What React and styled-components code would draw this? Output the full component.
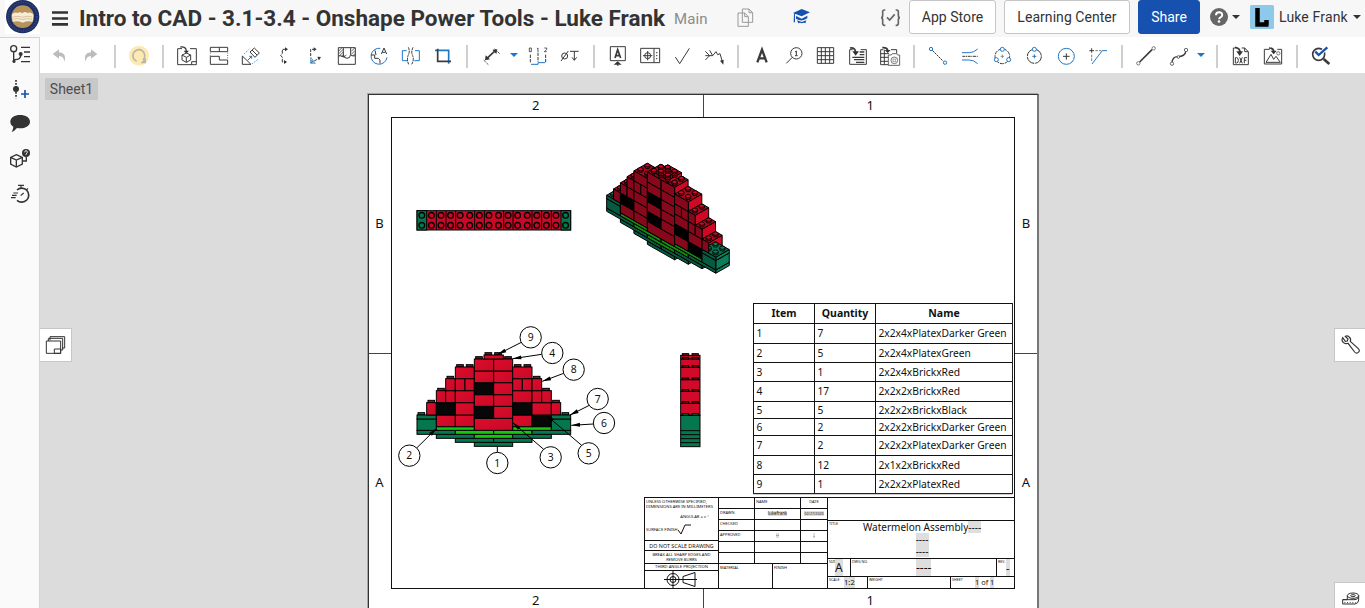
import React from "react";
import styled, { createGlobalStyle } from "styled-components";

const Global = createGlobalStyle`
  *{box-sizing:border-box}
  html,body{margin:0;padding:0;overflow:hidden}
  body{font-family:Roboto,"Liberation Sans",sans-serif;color:#333;background:#dcdcdc}
`;

const Page = styled.div`
  width: 1365px;
  height: 608px;
  display: flex;
  flex-direction: column;
  overflow: hidden;
`;
const Header = styled.header`
  height: 37px;
  flex: none;
  display: flex;
  align-items: center;
  background: #f7f7f7;
  padding: 0 3px 3px 5px;
`;
const LogoBox = styled.svg`
  width: 35px;
  height: 34px;
  flex: none;
  background: #fff;
`;
const MenuIcon = styled.svg`
  width: 16px;
  height: 16px;
  margin: 1px 11px 0 12px;
  flex: none;
`;
const Title = styled.h1`
  margin: 0;
  padding-top: 2px;
  width: 588px;
  flex: none;
  font-size: 22.5px;
  line-height: 34px;
  font-weight: 700;
  white-space: nowrap;
`;
const Branch = styled.span`
  margin: 4px 0 0 7px;
  width: 35px;
  flex: none;
  font-size: 15px;
  letter-spacing: 0.1px;
  color: #8b8b8b;
`;
const HeadIcon = styled.svg`
  flex: none;
  width: ${(p) => p.$w}px;
  height: ${(p) => p.$h}px;
  margin-left: ${(p) => p.$ml}px;
`;
const HeadButton = styled.button`
  height: 34px;
  width: ${(p) => p.$w}px;
  margin: 0 0 0 8px;
  padding: 0;
  flex: none;
  border: 1px solid ${(p) => (p.$primary ? "#1651b0" : "#c6c6c6")};
  border-radius: 3px;
  background: ${(p) => (p.$primary ? "#1651b0" : "#fff")};
  color: ${(p) => (p.$primary ? "#fff" : "#333")};
  font: 14px Roboto, sans-serif;
  letter-spacing: ${(p) => p.$ls || 0}px;
`;
const Caret = styled.span`
  width: 0;
  height: 0;
  flex: none;
  margin-left: ${(p) => p.$ml || 0}px;
  border: 4px solid transparent;
  border-top-color: ${(p) => p.$color || "#333"};
  border-bottom: 0;
`;
const UserName = styled.span`
  width: 69px;
  flex: none;
  margin-left: 5px;
  font-size: 14px;
  letter-spacing: 0.15px;
  white-space: nowrap;
`;
const Body = styled.div`
  flex: 1;
  display: flex;
  min-height: 0;
`;
const Sidebar = styled.nav`
  width: 40px;
  flex: none;
  background: #fafafa;
  border-right: 1px solid #d4d4d4;
  border-top: 1px solid #d4d4d4;
  display: flex;
  flex-direction: column;
`;
const SideIcon = styled.svg`
  width: 39px;
  height: 35px;
  flex: none;
  fill: none;
  stroke: #333;
  stroke-width: 4;
`;
const Main = styled.main`
  flex: 1;
  display: flex;
  flex-direction: column;
  min-width: 0;
`;
const Toolbar = styled.div`
  height: 36px;
  flex: none;
  display: flex;
  align-items: center;
  padding-left: 3px;
  background: #fff;
`;
const ToolSvg = styled.svg`
  width: 32px;
  height: 36px;
  flex: none;
  fill: none;
  stroke: #3a3a3a;
  stroke-width: 3;
`;
const Separator = styled.i`
  width: 2px;
  height: 23px;
  margin: 3px 7px 0;
  flex: none;
  background: #cfcfcf;
`;
const CaretSlot = styled.span`
  width: ${(p) => p.$w}px;
  padding-right: 2px;
  display: flex;
  justify-content: center;
  flex: none;
`;
const Canvas = styled.section`
  flex: 1;
  position: relative;
  min-height: 0;
  overflow: hidden;
  background: #dcdcdc;
  padding: 21px 0 0 328px;
`;
const SheetTab = styled.div`
  position: absolute;
  left: 5px;
  top: 5px;
  width: 53px;
  height: 22px;
  background: #c8c8c8;
  color: #4d4d4d;
  font-size: 14px;
  line-height: 23px;
  text-align: center;
`;
const FloatTab = styled.div`
  position: absolute;
  ${(p) => (p.$left ? "left:0;border-left:0 !important;" : "right:0;border-right:0 !important;")}
  top: ${(p) => p.$top}px;
  width: ${(p) => (p.$left ? 32 : 31)}px;
  height: 34px;
  border: 1px solid #c6c6c6;
  background: #fff;
  svg { display: block; width: 100%; height: 100%; fill: none; stroke: #333; }
`;
const Sheet = styled.div`
  width: 671px;
  height: 518px;
  display: grid;
  grid-template-columns: 22px 624px 22px;
  grid-template-rows: 22px 472px 22px;
  background: #fff;
  border: 1px solid #333;
  border-right: 2px solid #777;
  box-shadow: -1px -1px 0 #a5a5a5;
  font-family: "Noto Sans", sans-serif;
  color: #111;
`;
const Zone = styled.div`
  grid-area: ${(p) => p.$area};
  display: flex;
  flex-direction: ${(p) => (p.$side ? "column" : "row")};
  span {
    flex: 1;
    display: flex;
    align-items: center;
    justify-content: center;
    padding: ${(p) => p.$nudge || 0};
    font-size: 13px;
    line-height: 16px;
  }
  span + span { border: 0 solid #444; border-${(p) => (p.$side ? "top" : "left")}-width: 1px; }
`;
const Frame = styled.div`
  grid-area: 2 / 2;
  position: relative;
  border: 1px solid #111;
  display: flex;
  flex-direction: column;
  justify-content: flex-end;
  align-items: flex-end;
`;
const ViewSvg = styled.svg`
  position: absolute;
  left: ${(p) => p.$x - 392}px;
  top: ${(p) => p.$y - 118}px;
  width: ${(p) => p.$w}px;
  height: ${(p) => p.$h}px;
  overflow: visible;
  stroke: #000;
  stroke-width: 3;
`;
const Bom = styled.div`
  width: 260px;
  margin: 0 1px 3px 0;
  border: 0 solid #222;
  border-width: 0 1px 1px 0;
  box-shadow: 0 1px 0 -0.5px #999;
`;
const BomRow = styled.div`
  height: ${(p) => p.$h}px;
  display: grid;
  grid-template-columns: 61px 61px 137px;
  font-size: ${(p) => (p.$head ? 10.5 : 10.25)}px;
  font-weight: ${(p) => (p.$head ? 700 : 400)};
  text-align: ${(p) => (p.$head ? "center" : "left")};
  span {
    border: 0 solid #111;
    border-width: 1px 0 0 1px;
    padding-left: ${(p) => (p.$head ? 0 : 2.4)}px;
    line-height: ${(p) => p.$h - 1}px;
    white-space: nowrap;
  }
`;
const TitleBlock = styled.div`
  width: 370px;
  height: 91px;
  display: grid;
  grid-template-columns: 74px 109px 187px;
`;
const Tracks = styled.div`
  display: grid;
  grid-template-rows: ${(p) => p.$rows || "none"};
  grid-template-columns: ${(p) => p.$cols || "none"};
`;
const Cell = styled.div`
  border: 0 solid #111;
  border-width: 1px 0 0 1px;
  min-width: 0;
  min-height: 0;
  overflow: hidden;
  font-size: ${(p) => p.$fs || 4}px;
  line-height: ${(p) => p.$lh || 5}px;
  text-align: ${(p) => (p.$center ? "center" : "left")};
  padding: ${(p) => p.$pad || "1px"};
  white-space: nowrap;
`;
const Field = styled.span`
  background: #dedede;
  display: inline-block;
  font-size: ${(p) => p.$fs}px;
  line-height: ${(p) => p.$lh}px;
`;
const TitleLine = styled.div`
  font-size: 10px;
  line-height: 12px;
`;
const SheetOf = styled.span`
  font-size: 7.4px;
`;
const Stack = styled.div`
  display: flex;
  flex-direction: column;
  align-items: center;
`;
const LabelRow = styled.div`
  display: flex;
  align-items: flex-start;
  gap: ${(p) => p.$gap}px;
`;
const Tag = styled.span`
  width: ${(p) => p.$w}px;
  flex: none;
  font-size: 3.6px;
`;
const Block = styled.div`
  text-align: ${(p) => p.$align || "left"};
  padding: ${(p) => p.$pad || 0};
`;

const Tool = ({ at, children }) => <ToolSvg viewBox={`${at} 111 96 108`}>{children}</ToolSvg>;
const BLUE = "#1d78c8";

const View = ({ x, y, w, h, children }) => (
  <ViewSvg $x={x} $y={y} $w={w} $h={h} viewBox={`0 0 ${w * 3} ${h * 3}`}>{children}</ViewSvg>
);

/* bricks: [left, right, top, bottom, colour, has studs] */
const PLATES = [
  [223, 338, 367, 379, "d"], [166, 281, 355, 367, "d"], [281, 396, 355, 367, "d"],
  [109, 223, 343, 355, "d"], [223, 338, 343, 355, "g"], [338, 454, 343, 355, "d"],
  [51, 166, 331, 343, "d"], [166, 281, 331, 343, "g"], [281, 396, 331, 343, "g"], [396, 512, 331, 343, "d"],
  [109, 223, 320, 331, "g"], [338, 454, 320, 331, "g"],
];
const BRICKS = [
  [51, 109, 297, 331, "d"], [51, 109, 285, 297, "d", 1],
  [80, 109, 248, 285, "r", 1],
  [109, 166, 285, 320, "r"], [109, 166, 248, 285, "k"], [109, 137, 212, 248, "r", 1],
  [137, 166, 212, 248, "r"], [137, 166, 176, 212, "r", 1],
  [166, 223, 285, 320, "r"], [166, 223, 248, 285, "r"], [166, 223, 212, 248, "r"],
  [166, 195, 176, 212, "r"], [195, 223, 176, 212, "r"], [166, 223, 141, 176, "r", 1],
  [223, 338, 295, 331, "r"],
  [223, 281, 259, 295, "k"], [223, 281, 224, 259, "r"], [223, 281, 188, 224, "k"], [223, 281, 153, 188, "r"], [223, 281, 117, 153, "r", 1],
  [281, 338, 259, 295, "r"], [281, 338, 224, 259, "r"], [281, 338, 188, 224, "r"], [281, 338, 153, 188, "r"], [281, 338, 117, 153, "r", 1],
  [252, 310, 105, 117, "r", 1],
  [338, 396, 285, 320, "r"], [338, 396, 248, 285, "k"], [338, 396, 212, 248, "r"],
  [338, 367, 176, 212, "r"], [367, 396, 176, 212, "r"], [338, 396, 141, 176, "r", 1],
  [396, 454, 285, 320, "k"], [396, 454, 248, 285, "r"], [396, 425, 212, 248, "r"], [396, 425, 176, 212, "r", 1],
  [425, 454, 212, 248, "r", 1],
  [454, 482, 248, 285, "r", 1],
  [454, 512, 297, 331, "d"], [454, 512, 285, 297, "d", 1],
];
const STUDS = [
  [255, 105], [284, 105], [227, 117], [314, 117], [170, 141], [199, 141], [343, 141], [372, 141],
  [141, 176], [400, 176], [113, 212], [428, 212], [84, 248], [458, 248], [54, 285], [486, 285],
];
const FRONT = { r: "url(#redShade)", k: "#070707", g: "#12c80a", d: "#04774f" };
const BALLOONS = [
  [9, 392, 52, 364, 67, 293, 103], [4, 457, 99, 425, 103, 338, 116], [8, 521, 149, 491, 160, 427, 184],
  [7, 593, 237, 568, 256, 510, 285], [6, 612, 309, 580, 312, 514, 316], [5, 566, 400, 545, 376, 438, 285],
  [3, 452, 412, 431, 388, 338, 308], [1, 292, 429, 292, 397, 292, 380], [2, 28, 407, 50, 384, 110, 325],
];

function Arrow({ x1, y1, x2, y2 }) {
  const l = Math.hypot(x2 - x1, y2 - y1);
  const ux = (x2 - x1) / l;
  const uy = (y2 - y1) / l;
  const bx = x2 - ux * 26;
  const by = y2 - uy * 26;
  return (
    <g>
      <line x1={x1} y1={y1} x2={x2} y2={y2} />
      {l > 30 && <polygon stroke="none" fill="#000" points={`${x2},${y2} ${bx - uy * 6},${by + ux * 6} ${bx + uy * 6},${by - ux * 6}`} />}
    </g>
  );
}

const FrontView = () => (
  <View x={400} y={320} w={230} h={160}>
    <defs>
      <linearGradient id="redShade" x1="0" y1="0" x2="1" y2="1">
        <stop offset="0" stopColor="#de0c2c" />
        <stop offset="1" stopColor="#c60a26" />
      </linearGradient>
    </defs>
    {STUDS.map(([x, y]) => <rect key={x} x={x} y={y - 7} width="20" height="7" fill={y === 285 ? "#04774f" : "#a00a20"} />)}
    {[...PLATES, ...BRICKS].map((b, i) => (
      <rect key={i} x={b[0]} y={b[2]} width={b[1] - b[0]} height={b[3] - b[2]} fill={FRONT[b[4]]} />
    ))}
    {BALLOONS.map(([n, cx, cy, x1, y1, x2, y2]) => (
      <g key={n}>
        <Arrow x1={x1} y1={y1} x2={x2} y2={y2} />
        <circle cx={cx} cy={cy} r="32" fill="#fff" />
        <text x={cx} y={cy + 11} fontSize="31" textAnchor="middle" stroke="none" fill="#111">{n}</text>
      </g>
    ))}
  </View>
);

const ISO = {
  front: { r: "#86081a", k: "#000", g: "#148a0c", d: "#075a40" },
  right: { r: "#cf0824", k: "#050505", g: "#19a510", d: "#0b7d59" },
  top: { r: "#a30a20", k: "#111", g: "#16950e", d: "#0b6e4e" },
};
const iso = (u, v, d) => [0.71 * u + 13.8 + 0.71 * d, 0.403 * u + 0.83 * v - 121.3 - 0.403 * d];
const face = (...pts) => pts.map((p) => iso(...p).map((n) => n.toFixed(1)).join(",")).join(" ");

function IsoStuds({ b }) {
  const out = [];
  for (let d = 43; d > 0; d -= 29) {
    for (let u = b[0] + 14; u < b[1]; u += 29) {
      const [x, y] = iso(u, b[2], d);
      out.push(
        <g key={`${u}-${d}`} fill={ISO.right[b[4]]} strokeWidth="2.6">
          <path d={`M${x - 8} ${y - 5}v5a8 5 0 0 0 16 0v-5`} fill={ISO.front[b[4]]} />
          <ellipse cx={x} cy={y - 5} rx="8" ry="5" />
        </g>
      );
    }
  }
  return out;
}

const IsoView = () => (
  <View x={590} y={150} w={150} h={130}>
    {[...PLATES, ...BRICKS].map((b, i) => (
      <g key={i}>
        <polygon fill={ISO.right[b[4]]} points={face([b[1], b[2], 0], [b[1], b[2], 57], [b[1], b[3], 57], [b[1], b[3], 0])} />
        <polygon fill={ISO.top[b[4]]} points={face([b[0], b[2], 0], [b[1], b[2], 0], [b[1], b[2], 57], [b[0], b[2], 57])} />
        {b[5] && <IsoStuds b={b} />}
      </g>
    ))}
    {[...PLATES, ...BRICKS].map((b, i) => (
      <polygon key={i} fill={ISO.front[b[4]]} points={face([b[0], b[2], 0], [b[1], b[2], 0], [b[1], b[3], 0], [b[0], b[3], 0])} />
    ))}
    {BRICKS.filter((b) => b[5] && b[2] < 120).map((b, i) => <IsoStuds key={i} b={b} />)}
  </View>
);

const TopView = () => (
  <View x={405} y={200} w={180} h={40}>
    <rect x="36" y="32" width="461" height="58" fill="#cb0926" />
    <rect x="36" y="32" width="29" height="58" fill="#04774f" />
    <rect x="468" y="32" width="29" height="58" fill="#04774f" />
    {[94, 123, 152, 209, 238, 296, 324, 381, 410, 439].map((x) => <line key={x} x1={x} x2={x} y1="32" y2="90" />)}
    {Array.from({ length: 32 }, (_, i) => (
      <circle key={i} cx={50.5 + 28.75 * (i >> 1)} cy={i % 2 ? 76 : 46} r="8.5" fill="none" strokeWidth="4" />
    ))}
  </View>
);

const SideView = () => (
  <View x={660} y={340} w={60} h={115}>
    <rect x="62" y="46" width="58" height="180" fill="#d00a28" />
    <rect x="62" y="226" width="58" height="94" fill="#04774f" />
    {[57, 82, 119, 154, 190, 226, 272, 284, 296, 308].map((y) => <line key={y} x1="62" x2="120" y1={y} y2={y} />)}
    {[46, 57, 82, 119, 154, 190, 226].map((y) => (
      <g key={y} fill={y === 226 ? "#04774f" : "#8f0a1e"}>
        <rect x="67" y={y - 5} width="19" height="5" />
        <rect x="96" y={y - 5} width="19" height="5" />
      </g>
    ))}
  </View>
);

const PARTS = [
  [1, 7, "2x2x4xPlatexDarker Green", 20], [2, 5, "2x2x4xPlatexGreen", 19], [3, 1, "2x2x4xBrickxRed", 19],
  [4, 17, "2x2x2xBrickxRed", 20], [5, 5, "2x2x2xBrickxBlack", 17], [6, 2, "2x2x2xBrickxDarker Green", 17],
  [7, 2, "2x2x2xPlatexDarker Green", 20], [8, 12, "2x1x2xBrickxRed", 19], [9, 1, "2x2x2xPlatexRed", 19],
];

const PartsTable = () => (
  <Bom>
    <BomRow $h={20} $head><span>Item</span><span>Quantity</span><span>Name</span></BomRow>
    {PARTS.map(([n, q, name, h]) => (
      <BomRow key={n} $h={h}><span>{n}</span><span>{q}</span><span>{name}</span></BomRow>
    ))}
  </Bom>
);

const SIGN_ROWS = [["", "NAME", "DATE"], ["DRAWN", "lukefrank", "02/27/2023"], ["CHECKED", "", ""], ["APPROVED", "--", "--"], ["", "", ""], ["", "", ""]];

const DrawingTitle = () => (
  <TitleBlock>
    <Tracks $rows="43px 10px 13px 7px 18px">
      <Cell $fs={4.1}>
        UNLESS OTHERWISE SPECIFIED,<br />DIMENSIONS ARE IN MILLIMETERS
        <Block $align="right" $pad="5px 8px 0 0">ANGULAR = ± °</Block>
        <LabelRow $gap={0}>
          <Block $pad="8px 0 0 0">SURFACE FINISH</Block>
          <svg width="14" height="16" viewBox="0 -3 14 16" fill="none" stroke="#111" strokeWidth="1"><path d="M0 8l3 4 4-9h6" /></svg>
        </LabelRow>
      </Cell>
      <Cell $center $fs={5.4} $lh={8}>DO NOT SCALE DRAWING</Cell>
      <Cell $center $fs={4.1} $lh={5}>BREAK ALL SHARP EDGES AND<br />REMOVE BURRS</Cell>
      <Cell $center $fs={4.2} $lh={5} $pad="0">THIRD ANGLE PROJECTION</Cell>
      <Cell $center $pad="0">
        <svg width="50" height="17" viewBox="0 0 50 17" fill="none" stroke="#111">
          <circle cx="16" cy="8.5" r="6" /><circle cx="16" cy="8.5" r="3" />
          <path d="M7 8.5h18M16 0v17M26 5.500l12-4v14l-12-4zM24 8.500h16" />
        </svg>
      </Cell>
    </Tracks>
    <Tracks $rows="66px 25px">
      <Tracks $rows="repeat(6, 11px)">
        {SIGN_ROWS.map((r, i) => (
          <Tracks key={i} $cols="36px 46px 27px">
            <Cell>{r[0]}</Cell>
            <Cell $center={i > 0} $pad={i ? "2px 0 0" : "1px"}>{i && r[1] ? <Field $fs={4.4} $lh={5}>{r[1]}</Field> : r[1]}</Cell>
            <Cell $center $pad={i ? "2px 0 0" : "1px"}>{i && r[2] ? <Field $fs={3.6} $lh={5}>{r[2]}</Field> : r[2]}</Cell>
          </Tracks>
        ))}
      </Tracks>
      <Tracks $cols="54px 55px"><Cell>MATERIAL</Cell><Cell>FINISH</Cell></Tracks>
    </Tracks>
    <Tracks $rows="23px 38px 18px 12px">
      <Cell />
      <Cell $pad="0 1px">
        <LabelRow $gap={0}>
          <Tag $w={34}>TITLE</Tag>
          <Stack>
            <TitleLine>Watermelon Assembly<Field $fs={10} $lh={12}>----</Field></TitleLine>
            <Field $fs={10} $lh={12}>----</Field>
            <Field $fs={10} $lh={12}>----</Field>
          </Stack>
        </LabelRow>
      </Cell>
      <Tracks $cols="23px 146px 18px">
        <Cell $pad="0 1px"><LabelRow $gap={0}><Tag $w={6}>SIZE</Tag><Field $fs={12} $lh={17}>A</Field></LabelRow></Cell>
        <Cell $pad="0 1px"><LabelRow $gap={0}><Tag $w={64}>DWG NO.</Tag><Field $fs={12} $lh={17}>----</Field></LabelRow></Cell>
        <Cell $pad="0 1px"><LabelRow $gap={0}><Tag $w={8}>REV.</Tag><Field $fs={11} $lh={17}>-</Field></LabelRow></Cell>
      </Tracks>
      <Tracks $cols="40px 83px 64px">
        <Cell $pad="0 1px"><LabelRow $gap={0}><Tag $w={15}>SCALE</Tag><Field $fs={7.6} $lh={11}>1:2</Field></LabelRow></Cell>
        <Cell $pad="0 1px"><Tag>WEIGHT</Tag></Cell>
        <Cell $pad="0 1px"><LabelRow $gap={0}><Tag $w={23}>SHEET</Tag><Block><Field $fs={7.4} $lh={11}>1</Field><SheetOf> of </SheetOf><Field $fs={7.4} $lh={11}>1</Field></Block></LabelRow></Cell>
      </Tracks>
    </Tracks>
  </TitleBlock>
);

const Logo = () => (
  <LogoBox viewBox="0 0 105 102">
    <circle cx="53" cy="50" r="50" fill="#1d2f66" />
    <circle cx="53" cy="50" r="43" fill="none" stroke="#3c4c73" strokeWidth="5" strokeDasharray="3 4" />
    <circle cx="53" cy="50" r="34" fill="#b6935a" />
    <path d="M21 43q8-8 17-4 7-5 14 1 8-7 15-1 10-4 18 4l-2 22q-15-4-30 3-15-7-30-3z" fill="#f6ecd9" />
    <path d="M25 51q14-5 28 1 14-6 28-1M25 58q14-5 28 1 14-6 28-1" fill="none" stroke="#c9ac78" strokeWidth="2" />
  </LogoBox>
);

const ViewTools = () => (
  <>
    <Tool at={129}><path stroke="none" fill="#bcbcbc" d="M177 148l-19 14 19 14v-8q15 0 16 18 9-27-16-29z" /></Tool>
    <Tool at={225}><path stroke="none" fill="#bcbcbc" d="M273 148l19 14-19 14v-8q-15 0-16 18-9-27 16-29z" /></Tool>
    <Separator />
    <Tool at={369}>
      <circle cx="417" cy="167" r="30" fill="#fdeab3" stroke="none" />
      <path stroke="#b9b5a8" strokeWidth="5" d="M410 184A18 18 0 1 1 429 180" /><path fill="#b9b5a8" stroke="none" d="M421 190h17v-17z" />
    </Tool>
    <Separator />
    <Tool at={513}>
      <path d="M546 146h-13v48h56v-48h-19M575 194v-9h14" />
      <path d="M541 141q17-2 18 12" strokeWidth="4" /><path d="M551 152h16l-8 9z" fill="#333" stroke="none" />
      <path d="M559 159l13 6v15l-13 7-13-7v-15zM546 165l13 7 13-7M559 172v15" />
    </Tool>
    <Tool at={609}>
      <path d="M631 142h52v13h-52zM658 142v13M631 193v-24h27v11h25v13z" /><path stroke={BLUE} strokeDasharray="3 4" d="M631 158v9M683 158v20" />
    </Tool>
    <Tool at={705}>
      <path d="M727 168l26 25h-26zM750 156l13-12 15 15-13 13zM756 150l15 15" /><path stroke={BLUE} strokeDasharray="3 4" d="M733 161l16-15M756 192l18-14" /><path stroke={BLUE} d="M743 181l12-12M748 169h7v7" />
    </Tool>
    <Tool at={801}><path d="M860 148h-13v12l-5 6 5 6v14h11" strokeDasharray="12 3" /><path fill="#333" stroke="none" d="M855 142l9 6-9 6zM852 180l9 6-9 6z" /></Tool>
    <Tool at={897}>
      <path d="M932 168v-20h13M932 188l26-13" strokeDasharray="9 3" /><path fill="#333" stroke="none" d="M941 142l9 6-9 6zM952 170l11 1-6 10z" /><path stroke={BLUE} strokeWidth="2" d="M932 172v18h14zM936 178v9M932 180l9 9" />
    </Tool>
    <Tool at={993}>
      <path d="M1015 143h51v50h-51zM1015 168q8-3 15 3v-28M1030 163q1 12 11 12t11-12v-20M1052 165q8 5 14 2" /><path strokeWidth="2.4" d="M1016 153l9-9M1017 161l12-13M1018 168l12-12M1024 171l6-6M1031 172l8-7M1054 154l10-10M1054 163l11-11M1058 168l8-8" />
    </Tool>
    <Tool at={1089}>
      <path stroke={BLUE} d="M1141 145a24 24 0 1 0 20 27" /><path d="M1113 165h11v10h11l5 5v10" /><path d="M1125 151l3 14M1144 162l8-18 8 18M1147 157h9" />
    </Tool>
    <Tool at={1185}>
      <path stroke={BLUE} d="M1220 152h-13v30h15M1245 152h13v30h-15" /><path strokeDasharray="9 2" d="M1225 142q6 13-1 25-4 13 2 26M1239 142q-7 14-1 25 5 13-3 26" />
    </Tool>
    <Tool at={1281}><path stroke={BLUE} strokeWidth="5" d="M1305 151h41v40" /><path strokeWidth="5" d="M1313 146v38h40" /></Tool>
    <Separator />
  </>
);

const NoteTools = () => (
  <>
    <Tool at={75}>
      <path strokeWidth="5" d="M110 176l26-24" /><path fill="#333" stroke="none" d="M105 181l2-15 13 12zM142 148l-15 1 12 13z" /><path strokeWidth="2.5" d="M134 146l15 15M101 180l14 14" strokeDasharray="9 3" />
    </Tool>
    <CaretSlot $w={15}><Caret $color={BLUE} /></CaretSlot>
    <Tool at={216}>
      <path d="M241 164v23M264 158v28M287 164v23" strokeDasharray="10 3" /><path stroke={BLUE} d="M243 193h21v-5h21" />
      <path strokeWidth="2.5" d="M238 144h6v11h-6zM261 146l3-2v12M283 144h7v5l-7 6h7" />
    </Tool>
    <Tool at={312}><circle cx="344" cy="168" r="9" /><path d="M333 183l22-30M360 154h26M373 154v26M366 172l7 9 7-9" /></Tool>
    <Separator />
    <Tool at={456}>
      <path d="M481 140h45v42h-45z" /><path strokeWidth="5" d="M495 174l8-25 9 25M498 167h12" /><path fill="#333" stroke="none" d="M491 194l12-10 12 10zM502 194h3v4h-3z" />
    </Tool>
    <Tool at={552}>
      <path d="M572 145h57v43h-57zM612 145v43" /><circle cx="593" cy="167" r="9" /><path d="M579 167h28M593 153v28" /><path strokeDasharray="4 4" d="M618 158h6M618 167h6M618 176h6" />
    </Tool>
    <Tool at={648}><path d="M676 171l13 20 29-46" /></Tool>
    <Tool at={744}><path d="M766 154l13 13-13 13M766 167h22l10-12 5 9 7-3 7 24M779 151l9 16" /><path fill="#333" stroke="none" d="M810 182l11-3-1 15z" /></Tool>
    <Separator />
    <Tool at={888}><path strokeWidth="7" d="M922 187l14-38 14 38M927 175h18" /></Tool>
    <Tool at={984}><circle cx="1039" cy="160" r="17" /><path d="M1027 172l-18 18M1035 156l4-3v14M1035 167h8" /></Tool>
    <Tool at={1080}><path d="M1102 143h49v47h-49zM1114 143v47M1126 143v47M1139 143v47M1102 155h49M1102 167h49M1102 179h49" /></Tool>
    <Tool at={1176}>
      <path d="M1208 149h-9v44h50v-44h-17" /><path strokeWidth="5" d="M1200 144q15-2 17 12" /><path fill="#333" stroke="none" d="M1207 154h20l-10 13z" /><path strokeWidth="4" d="M1229 156h14M1229 164h14M1207 172h36M1212 179h31M1218 187h25" />
    </Tool>
    <Tool at={1272}>
      <path d="M1300 149h-8v45h26M1323 149h17v12M1303 149v45M1292 161h25M1292 172h24M1292 184h24" /><path strokeWidth="5" d="M1297 143q14-1 16 7" /><path fill="#333" stroke="none" d="M1304 150h18l-9 9z" />
      <path fill="#fff" d="M1315 165h9l3-4h13l3 4h6v31h-34z" stroke="#666" /><circle cx="1333" cy="181" r="10" stroke="#777" /><path strokeWidth="2" stroke="#777" d="M1329 177h8v8h-8z" />
    </Tool>
    <Separator />
  </>
);

const SketchTools = () => (
  <>
    <Tool at={51}><path strokeDasharray="7 2" d="M82 151l33 33" /><g stroke={BLUE}><circle cx="78" cy="147" r="5" /><circle cx="120" cy="188" r="5" /></g></Tool>
    <Tool at={147}><path d="M172 169h47" strokeDasharray="9 2 3 2" /><path stroke={BLUE} d="M171 158h22q13 0 25-11M171 180h22q13 0 25 11" /></Tool>
    <Tool at={243}>
      <circle cx="292" cy="169" r="22" strokeDasharray="12 3" /><path strokeWidth="2.5" stroke="#777" d="M292 164v10M287 169h10" /><g stroke={BLUE} fill="#fff"><circle cx="292" cy="148" r="6" /><circle cx="274" cy="179" r="6" /><circle cx="311" cy="179" r="6" /></g>
    </Tool>
    <Tool at={339}><circle cx="388" cy="169" r="21" strokeDasharray="30 3" /><circle cx="388" cy="148" r="6" fill="#fff" stroke={BLUE} /><path stroke={BLUE} d="M388 163v12M382 169h12" /></Tool>
    <Tool at={435}><circle cx="484" cy="169" r="24" stroke={BLUE} /><path d="M484 160v19M474 169h20" /></Tool>
    <Tool at={531}><path d="M560 145v13M553 152h14" /><path strokeDasharray="8 3" d="M571 152h18M560 164v22" strokeWidth="2" /><path stroke={BLUE} d="M606 152h-14l-31 40" /></Tool>
    <Separator />
    <Tool at={675}><path strokeWidth="5" d="M704 186l37-37" /><g fill="#fff" stroke="#777"><circle cx="700" cy="190" r="5" /><circle cx="746" cy="145" r="5" /></g></Tool>
    <Tool at={771}><path strokeWidth="4" d="M801 189q1-19 17-19 23 0 25-18" /><g fill="#fff" stroke="#666"><circle cx="801" cy="191" r="5" /><circle cx="820" cy="171" r="4" /><circle cx="843" cy="150" r="5" /></g></Tool>
    <CaretSlot $w={15}><Caret $color={BLUE} /></CaretSlot>
    <Separator />
    <Tool at={960}>
      <path d="M991 144h-6v50h45v-39l-11-11h-9M1019 144v11h11" /><path strokeWidth="5" d="M990 142q15 2 15 14" /><path fill="#333" stroke="none" d="M994 154h20l-10 14z" />
      <path strokeWidth="3" d="M991 173v16h4q5 0 5-8t-5-8zM1004 172l8 18M1012 172l-8 18M1018 190v-17h8M1018 181h6" />
    </Tool>
    <Tool at={1056}>
      <path d="M1094 148h-16v44h52v-44h-13M1083 187l15-24 8 15 7-9 13 18z" /><path strokeWidth="5" d="M1092 144q13 0 14 9" /><path fill="#333" stroke="none" d="M1097 152h18l-9 11z" /><circle cx="1120" cy="160" r="5" stroke="#777" />
    </Tool>
    <Separator />
    <Tool at={1200}>
      <circle cx="1241" cy="163" r="18" strokeWidth="5" /><path strokeWidth="8" d="M1256 177l17 15" /><path stroke="#fff" strokeWidth="12" d="M1231 156l10 10 24-23" /><path stroke="#1651b0" strokeWidth="7" d="M1231 155l10 10 26-23" />
    </Tool>
  </>
);

export default function App() {
  return (
    <Page>
      <Global />
      <Header>
        <Logo />
        <MenuIcon viewBox="0 0 16 16" stroke="#333" strokeWidth="2.6"><path d="M0 2.5h16M0 8.5h16M0 14.4h16" /></MenuIcon>
        <Title>Intro to CAD - 3.1-3.4 - Onshape Power Tools - Luke Frank</Title>
        <Branch>Main</Branch>
        <HeadIcon $w={17} $h={20} $ml={28} viewBox="860 22 51 60" fill="#f7f7f7" stroke="#999" strokeWidth="3">
          <path d="M876 28h20l11 11v29h-31zM896 28v11h11M863 40h20l11 11v29h-31zM883 40v11h11" />
        </HeadIcon>
        <HeadIcon $w={17} $h={18} $ml={39} viewBox="1028 25 51 54" fill="#1651b0">
          <path d="M1028 40l26-12 25 10-25 12zM1037 49l17 8 17-9v8q-17 12-34 1zM1031 42h3v26h-4zM1040 62l14 5 14-5-3 9q-5-4-11 0-5-4-10 0z" />
        </HeadIcon>
        <HeadIcon $w={21} $h={20} $ml={70} viewBox="1285 22 63 60" fill="none" stroke="#666" strokeWidth="5">
          <path d="M1301 31h-3q-5 0-5 6v10q0 7-5 7 5 0 5 7v10q0 6 5 6h3M1332 31h3q5 0 5 6v10q0 7 5 7-5 0-5 7v10q0 6-5 6h-3M1306 53l8 8 15-17" />
        </HeadIcon>
        <HeadButton $w={87} $ls={0.05}>App Store</HeadButton>
        <HeadButton $w={126} $ls={0.05}>Learning Center</HeadButton>
        <HeadButton $w={62} $primary>Share</HeadButton>
        <HeadIcon $w={18} $h={18} $ml={10} viewBox="0 0 18 18">
          <circle cx="9" cy="9" r="9" fill="#666" /><path d="M6 7.2q0-3 3.1-3T12.200 7q0 1.500-1.700 2.400-1.400.7-1.400 1.800" fill="none" stroke="#fff" strokeWidth="2" /><circle cx="9" cy="13.500" r="1.300" fill="#fff" />
        </HeadIcon>
        <Caret $ml={4} />
        <HeadIcon $w={24} $h={24} $ml={10} viewBox="0 0 24 24">
          <rect width="24" height="24" rx="1.500" fill="#8ec9ea" /><path d="M7.500 3v16.500h11M16.500 15v5" fill="none" stroke="#000" strokeWidth="4.500" />
        </HeadIcon>
        <UserName>Luke Frank</UserName>
        <Caret $ml={5} />
      </Header>
      <Body>
        <Sidebar>
          <SideIcon viewBox="0 114 117 105">
            <circle cx="41" cy="146" r="9" /><path d="M41 156v31M43 179q20 1 20-17M63 142h27M72 156h18M72 170h18M63 185h27" /><circle cx="42" cy="184" r="3" fill="#333" /><circle cx="62" cy="162" r="4" fill="#333" />
          </SideIcon>
          <SideIcon viewBox="0 219 117 105">
            <path strokeWidth="5" strokeDasharray="5 4" d="M48 240v55" /><circle cx="48" cy="267" r="7" fill="#333" /><path stroke="#1651b0" strokeWidth="5" d="M75 270v24M63 282h24" />
          </SideIcon>
          <SideIcon viewBox="0 114 117 105"><path stroke="none" fill="#333" d="M60 136c17 0 30 8 30 20s-13 20-30 20q-5 0-9-1-7 9-16 12 4-7 5-16-9-5-9-15c0-12 13-20 29-20z" transform="translate(0 -1)" /></SideIcon>
          <SideIcon viewBox="0 219 117 105">
            <path d="M49 254l18 8v20l-18 9-17-9v-20zM32 262l17 8 18-8M49 270v21M68 273h11v-12" /><circle cx="78" cy="249" r="12" fill="#333" stroke="none" /><path stroke="#fff" strokeWidth="2.5" d="M74 247q0-5 4-5t4 4-4 6v3" />
          </SideIcon>
          <SideIcon viewBox="0 324 117 105">
            <path d="M51 360A21 21 0 1 1 51 391" strokeWidth="5" /><path d="M54 346h18M63 347v8M79 360l5-5M62 377l9-8M40 369h14M36 376h14M33 383h14" strokeWidth="3.5" />
          </SideIcon>
        </Sidebar>
        <Main>
          <Toolbar><ViewTools /><NoteTools /><SketchTools /></Toolbar>
          <Canvas>
            <Sheet>
              <Zone $area="1 / 1 / 2 / 4" $nudge="0 0 2px"><span>2</span><span>1</span></Zone>
              <Zone $area="3 / 1 / 4 / 4"><span>2</span><span>1</span></Zone>
              <Zone $area="1 / 1 / 4 / 2" $side $nudge="0 1px 1px 0"><span>B</span><span>A</span></Zone>
              <Zone $area="1 / 3 / 4 / 4" $side $nudge="0 0 1px 0"><span>B</span><span>A</span></Zone>
              <Frame>
                <TopView /><IsoView /><FrontView /><SideView />
                <PartsTable />
                <DrawingTitle />
              </Frame>
            </Sheet>
            <SheetTab>Sheet1</SheetTab>
            <FloatTab $left $top={255}>
              <svg viewBox="120 777 93 96" strokeWidth="3"><path d="M150 811v-11h44v34h-8M145 816v-11h43v35h-7" /><path fill="#fff" d="M139 813h43v37h-43zM163 837h19v13h-19z" /></svg>
            </FloatTab>
            <FloatTab $top={255}>
              <svg viewBox="90 28 90 96" strokeWidth="3.5"><path d="M113 54q-5 9 3 15 6 5 13 2l20 26q5 6 11 1t0-11l-24-22q3-9-4-14-5-4-11-1l8 8-2 6-6 1z" /></svg>
            </FloatTab>
            <FloatTab $top={509}>
              <svg viewBox="90 790 90 96" strokeWidth="3"><path d="M127 828v12h-14v13h37q11-2 11-12v-13M113 840h34q14 0 14-12" /><ellipse cx="144" cy="828" rx="17" ry="8" /><ellipse cx="144" cy="828" rx="7" ry="3" /><path strokeDasharray="3 5" d="M118 849h34" /></svg>
            </FloatTab>
          </Canvas>
        </Main>
      </Body>
    </Page>
  );
}
